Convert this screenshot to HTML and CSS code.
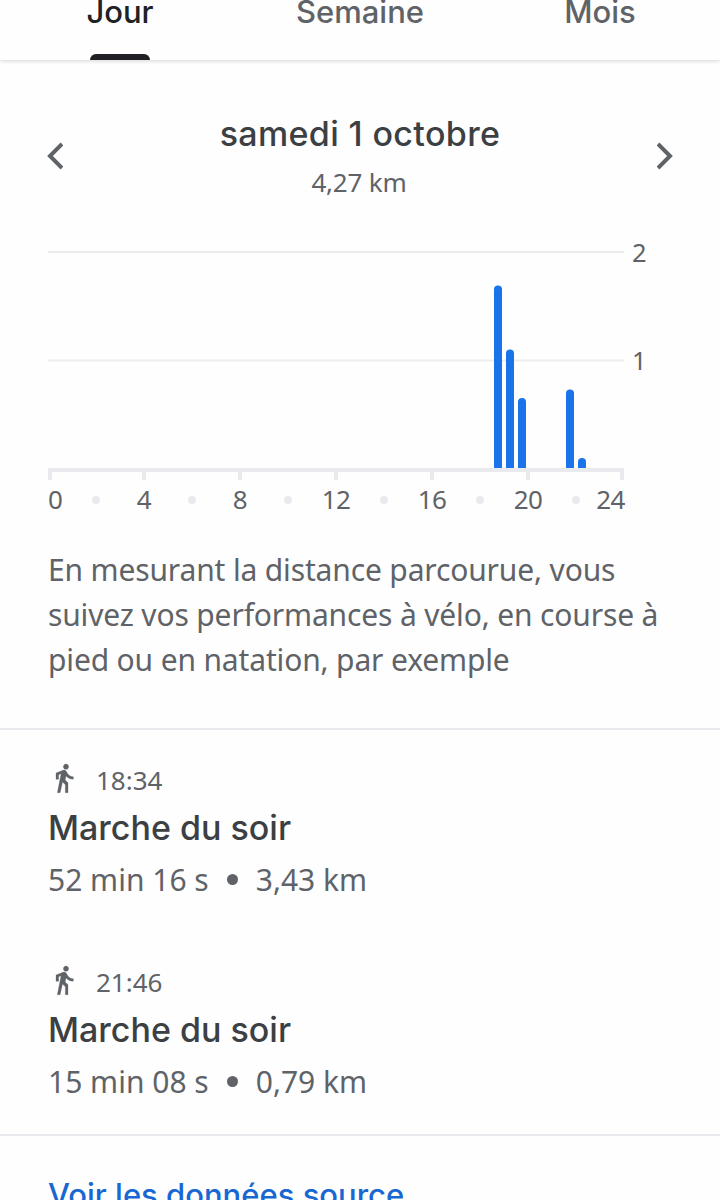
FILE: index.html
```
<!DOCTYPE html>
<html lang="fr">
<head>
  <meta charset="UTF-8">
  <title>Distance</title>
  <link rel="stylesheet" href="styles.css">
</head>
<body>

<nav class="tabs">
  <a class="tab active">Jour</a>
  <a class="tab">Semaine</a>
  <a class="tab">Mois</a>
</nav>

<header class="periode">
  <svg class="fleche" viewBox="0 0 16 28"><path d="M15 2 L3 14 L15 26"/></svg>
  <div class="date">
    <h1>samedi 1 octobre</h1>
    <p>4,27 km</p>
  </div>
  <svg class="fleche" viewBox="0 0 16 28"><path d="M1 2 L13 14 L1 26"/></svg>
</header>

<section class="graphique">
  <svg class="barres" viewBox="0 0 576 230">
    <!-- grille -->
    <rect x="0" y="1" width="576" height="2" fill="#e8eaed"/>
    <rect x="0" y="109.5" width="576" height="2" fill="#eceef0"/>
    <!-- distance par demi-heure -->
    <g fill="#1a73e8">
      <path d="M446 219V39.5a4 4 0 0 1 8 0V219z"/>
      <path d="M458 219V103.5a4 4 0 0 1 8 0V219z"/>
      <path d="M470 219V152a4 4 0 0 1 8 0V219z"/>
      <path d="M518 219V143.5a4 4 0 0 1 8 0V219z"/>
      <path d="M530 219V212a4 4 0 0 1 8 0V219z"/>
    </g>
    <!-- axe -->
    <path fill="#e8eaed" d="M0 218H576V230H572V222H482V230H478V222H386V230H382V222H290V230H286V222H194V230H190V222H98V230H94V222H4V230H0z"/>
  </svg>
  <div class="echelle">
    <span>2</span>
    <span>1</span>
  </div>
</section>

<div class="heures">
  <span class="debut">0</span><i></i><span>4</span><i></i><span>8</span><i></i><span>12</span><i></i><span>16</span><i></i><span>20</span><i></i><span class="fin">24</span>
</div>

<p class="description">
  En mesurant la distance parcourue, vous<br>
  suivez vos performances à vélo, en course à<br>
  pied ou en natation, par exemple
</p>

<section class="activites">
  <article>
    <div class="heure">
      <svg viewBox="0 0 24 24"><path d="M13.5 5.5c1.1 0 2-.9 2-2s-.9-2-2-2-2 .9-2 2 .9 2 2 2zM9.8 8.9L7 23h2.1l1.8-8 2.1 2v6h2v-7.5l-2.1-2 .6-3C14.8 12 16.8 13 19 13v-2c-1.9 0-3.5-1-4.3-2.4l-1-1.6c-.4-.6-1-1-1.7-1-.3 0-.5.1-.8.1L6 8.3V13h2V9.6l1.8-.7"/></svg>
      <span>18:34</span>
    </div>
    <h2>Marche du soir</h2>
    <p><span>52 min 16 s</span><i></i><span>3,43 km</span></p>
  </article>
  <article>
    <div class="heure">
      <svg viewBox="0 0 24 24"><path d="M13.5 5.5c1.1 0 2-.9 2-2s-.9-2-2-2-2 .9-2 2 .9 2 2 2zM9.8 8.9L7 23h2.1l1.8-8 2.1 2v6h2v-7.5l-2.1-2 .6-3C14.8 12 16.8 13 19 13v-2c-1.9 0-3.5-1-4.3-2.4l-1-1.6c-.4-.6-1-1-1.7-1-.3 0-.5.1-.8.1L6 8.3V13h2V9.6l1.8-.7"/></svg>
      <span>21:46</span>
    </div>
    <h2>Marche du soir</h2>
    <p><span>15 min 08 s</span><i></i><span>0,79 km</span></p>
  </article>
</section>

<a class="source">Voir les données source</a>

</body>
</html>
```

FILE: styles.css
```
* {
  box-sizing: border-box;
}

body {
  margin: 0;
  height: 1200px;
  overflow: hidden;
  background: #fefefe;
  color: #5f6368;
  font-family: 'Noto Sans', sans-serif;
  white-space: nowrap;
}

h1, h2, p {
  margin: 0;
}

.tabs {
  display: grid;
  grid-template-columns: repeat(3, 1fr);
  height: 60px;
  background: #fefefe;
  box-shadow: 0 1px 4px rgba(0,0,0,0.17);
}

.tab {
  display: flex;
  flex-direction: column;
  align-items: center;
  justify-content: space-between;
  margin-top: -10px;
  font: 500 31px/43px Inter, sans-serif;
}

.tab.active {
  color: #202124;
}

.tab.active::after {
  content: "";
  width: 60px;
  height: 6px;
  border-radius: 6px 6px 0 0;
  background: #202124;
}

.periode {
  display: flex;
  justify-content: space-between;
  padding: 52px 47px 0;
  height: 190px;
}

.fleche {
  width: 16px;
  height: 28px;
  margin-top: 30px;
  fill: none;
  stroke: #5f6368;
  stroke-width: 4;
}

.date {
  text-align: center;
}

.date h1 {
  color: #3c4043;
  font: 500 34px/44px Inter, sans-serif;
  letter-spacing: 0.35px;
}

.date p {
  font-size: 26px;
  line-height: 36px;
  margin-top: 8px;
  margin-right: 2px;
  letter-spacing: -0.2px;
}

.graphique {
  display: flex;
  gap: 8px;
  padding-left: 48px;
}

.barres {
  width: 576px;
  height: 230px;
}

.echelle {
  display: flex;
  flex-direction: column;
  gap: 72px;
  margin-top: -16px;
  font-size: 25.5px;
  line-height: 36px;
}

.heures {
  display: grid;
  grid-template-columns: 24px repeat(11, 48px) 24px;
  align-items: center;
  justify-items: center;
  width: 576px;
  margin: 1px 0 0 48px;
  height: 38px;
  font-size: 26px;
  letter-spacing: -0.5px;
}

.heures span {
  margin-top: -2px;
}

.heures i {
  width: 8px;
  height: 8px;
  border-radius: 50%;
  background: #e8eaed;
}

.heures .debut {
  justify-self: start;
}

.heures .fin {
  justify-self: end;
  margin-right: -1px;
}

.description {
  height: 181px;
  margin-top: 28px;
  padding-left: 48px;
  font-size: 30px;
  line-height: 45px;
  letter-spacing: -0.15px;
}

.activites {
  border-top: 2px solid #e8eaed;
  border-bottom: 2px solid #e8eaed;
  height: 408px;
  padding: 32px 48px 0;
}

.activites article {
  height: 202px;
}

.heure {
  display: flex;
  align-items: center;
  gap: 16px;
  height: 36px;
  font-size: 26px;
}

.heure svg {
  width: 32px;
  height: 32px;
  margin: -4px 0 0;
  fill: #5f6368;
  stroke: #5f6368;
  stroke-width: 0.2;
}

.activites h2 {
  margin-top: 6px;
  color: #3c4043;
  font: 500 34px/48px Inter, sans-serif;
}

.activites p {
  display: flex;
  align-items: center;
  height: 44px;
  margin-top: 5px;
  font-size: 30px;
}

.activites p i {
  width: 11px;
  height: 11px;
  margin: 0 18px;
  border-radius: 50%;
  background: #5f6368;
}

.source {
  display: block;
  padding: 35px 48px 0;
  color: #1967d2;
  font: 500 31px/48px Inter, sans-serif;
}
```
